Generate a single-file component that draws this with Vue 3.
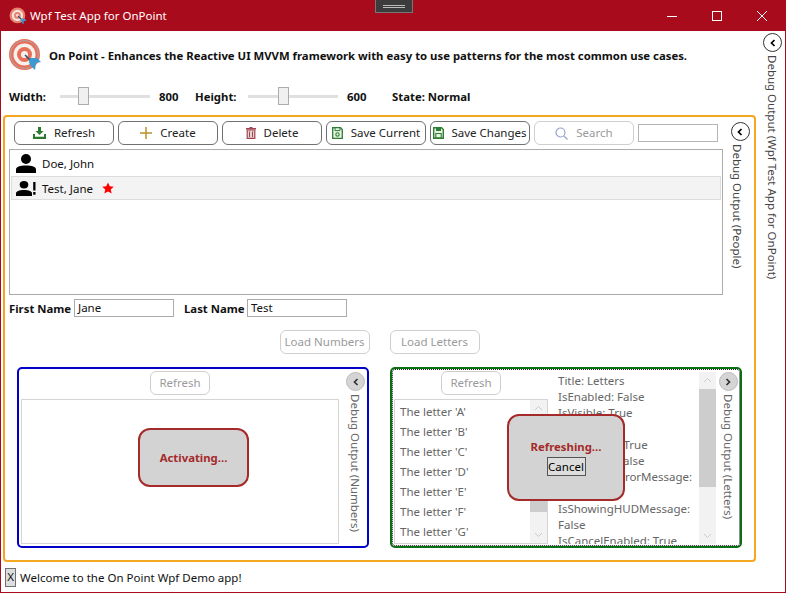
<script setup>
const letters = ['A', 'B', 'C', 'D', 'E', 'F', 'G', 'H']
const debugLines = [
  'Title: Letters',
  'IsEnabled: False',
  'IsVisible: True',
  'IsBusy: True',
  'IsActivated: True',
  'IsLoading: False',
  'IsShowingErrorMessage:',
  'False',
  'IsShowingHUDMessage:',
  'False',
  'IsCancelEnabled: True'
]
</script>

<template>
  <div class="window">
    <header class="titlebar">
      <svg class="app-icon" width="18" height="18" viewBox="0 0 32 32">
        <circle cx="15" cy="15" r="14" fill="#e8826e" />
        <circle cx="15" cy="15" r="10" fill="#f4e4de" />
        <circle cx="15" cy="15" r="6" fill="#e8826e" />
        <circle cx="15" cy="15" r="2.5" fill="#f4e4de" />
        <path d="M16 16 L24 24" stroke="#34506b" stroke-width="2" />
        <path d="M21 21 L28 21 L31 25 L26 25 L26 31 L22 27 Z" fill="#3a9bd0" />
      </svg>
      <span class="title-text">Wpf Test App for OnPoint</span>
      <div class="debug-strip"><i></i><i></i></div>
      <div class="caption-buttons">
        <svg width="12" height="12" viewBox="0 0 12 12"><path d="M1 6.5H11" stroke="#fff" stroke-width="1" /></svg>
        <svg width="12" height="12" viewBox="0 0 12 12"><rect x="1.5" y="1.5" width="9" height="9" fill="none" stroke="#fff" /></svg>
        <svg width="12" height="12" viewBox="0 0 12 12"><path d="M1 1L11 11M11 1L1 11" stroke="#fff" stroke-width="1" /></svg>
      </div>
    </header>

    <div class="client">
      <div class="main">
        <div class="intro">
          <svg width="32" height="32" viewBox="0 0 32 32">
            <circle cx="15.5" cy="15.5" r="15.5" fill="#e8705a" />
            <circle cx="15.5" cy="15.5" r="14" fill="none" stroke="#a9a9a9" stroke-width="1" />
            <circle cx="15.5" cy="15.5" r="11" fill="#f6f1ea" />
            <circle cx="15.5" cy="15.5" r="7.5" fill="#e8705a" />
            <circle cx="15.5" cy="15.5" r="3.5" fill="#f6f1ea" />
            <path d="M16 16 L23 23" stroke="#34506b" stroke-width="1.6" />
            <path d="M21 19 L28 19 L32 23 L27 24 L26 31 L21 26 L20 23 Z" fill="#3a9bd0" />
          </svg>
          <b>On Point - Enhances the Reactive UI MVVM framework with easy to use patterns for the most common use cases.</b>
        </div>

        <div class="sizes">
          <b class="size-label">Width:</b>
          <div class="slider first"><span class="thumb"></span></div>
          <b class="size-value">800</b>
          <b class="size-label height">Height:</b>
          <div class="slider"><span class="thumb"></span></div>
          <b class="size-value">600</b>
          <b class="state">State: Normal</b>
        </div>

        <section class="people">
          <div class="people-top">
            <div class="people-left">
              <div class="toolbar">
                <button class="btn">
                  <svg width="13" height="12" viewBox="0 0 13 12"><path d="M5 0H8V4H10.5L6.5 8L2.5 4H5Z" fill="#2a7a2e" /><path d="M0 7V12H13V7H11V9.7H2V7Z" fill="#2a7a2e" /></svg>
                  Refresh
                </button>
                <button class="btn">
                  <svg width="12" height="12" viewBox="0 0 12 12"><path d="M6 0V12M0 6H12" stroke="#b8922c" stroke-width="1.5" /></svg>
                  Create
                </button>
                <button class="btn">
                  <svg width="10" height="12" viewBox="0 0 10 12"><path d="M3.5 0H6.5V1H10V2.5H0V1H3.5Z" fill="#a04550" /><path d="M1.2 3H8.8V11.4H1.2Z" fill="#e8d3d5" stroke="#a04550" stroke-width="1.2" /><path d="M3.5 4.5V10M6.5 4.5V10" stroke="#a04550" stroke-width="1" /></svg>
                  Delete
                </button>
                <button class="btn">
                  <svg width="11" height="12" viewBox="0 0 11 12"><path d="M.7 .7H8.5L10.3 2.5V11.3H.7Z" fill="#e9f3e4" stroke="#2d7d32" stroke-width="1.3" /><path d="M3 1V3.6H8V1" fill="none" stroke="#2d7d32" /><circle cx="5.5" cy="7.5" r="1.7" fill="none" stroke="#2d7d32" stroke-width="1.1" /></svg>
                  Save Current
                </button>
                <button class="btn save-changes">
                  <svg width="11" height="12" viewBox="0 0 11 12"><path d="M.7 .7H8.5L10.3 2.5V11.3H.7Z" fill="#e9f3e4" stroke="#2d7d32" stroke-width="1.4" /><path d="M3 1H8V4H3Z" fill="#2d7d32" /><path d="M2.8 6.5H8.2V11H2.8Z" fill="none" stroke="#2d7d32" stroke-width="1.1" /></svg>
                  Save Changes
                </button>
                <button class="btn disabled">
                  <svg width="13" height="13" viewBox="0 0 13 13"><circle cx="5.5" cy="5.5" r="4.5" fill="none" stroke="#9aa0d0" stroke-width="1.2" /><path d="M8.8 8.8L12.5 12.5" stroke="#9aa0d0" stroke-width="1.2" /></svg>
                  Search
                </button>
                <div class="search-box"></div>
              </div>
              <div class="people-list">
                <div class="person">
                  <svg width="20" height="19" viewBox="0 0 20 19"><circle cx="10" cy="5" r="5" /><path d="M0 19V15.5C0 12.8 4 11.5 10 11.5S20 12.8 20 15.5V19Z" /></svg>
                  <span>Doe, John</span>
                </div>
                <div class="person selected">
                  <svg width="20" height="15" viewBox="0 0 20 15"><ellipse cx="8" cy="3.7" rx="4.3" ry="3.7" /><path d="M0 15V12.2C0 10.4 3 9 8 9S16 10.4 16 12.2V15Z" /><path d="M17.2 1H19.5V9.5H17.2ZM17.2 11H19.5V13.8H17.2Z" /></svg>
                  <span>Test, Jane</span>
                  <svg class="star" width="12" height="12" viewBox="0 0 24 24"><path d="M12 1L15.5 8.6L23.5 9.4L17.5 15L19.3 23L12 18.8L4.7 23L6.5 15L.5 9.4L8.5 8.6Z" fill="#f00" /></svg>
                </div>
              </div>
            </div>
            <aside class="debug-col people-debug">
              <span class="toggle"><svg width="8" height="8" viewBox="0 0 8 8"><path d="M5.5 1L2.5 4L5.5 7" fill="none" stroke="#000" stroke-width="1.7" /></svg></span>
              <span class="vertical nudged">Debug Output (People)</span>
            </aside>
          </div>

          <div class="names">
            <b class="name-label">First Name</b>
            <div class="field">Jane</div>
            <b class="name-label last-label">Last Name</b>
            <div class="field last-field">Test</div>
          </div>

          <div class="loaders">
            <button class="btn disabled load">Load Numbers</button>
            <button class="btn disabled load">Load Letters</button>
          </div>

          <div class="boards">
            <div class="board blue">
              <div class="board-left">
                <button class="btn disabled small">Refresh</button>
                <div class="board-list numbers"></div>
              </div>
              <aside class="debug-col board-debug numbers-debug">
                <span class="toggle grey"><svg width="8" height="8" viewBox="0 0 8 8"><path d="M5.5 1L2.5 4L5.5 7" fill="none" stroke="#333" stroke-width="1.7" /></svg></span>
                <span class="vertical grey-text">Debug Output (Numbers)</span>
              </aside>
              <div class="hud activating"><b>Activating...</b></div>
            </div>

            <div class="board green">
              <div class="board-left letters-col">
                <button class="btn disabled small">Refresh</button>
                <div class="board-list letters">
                  <div class="letter-rows">
                    <div v-for="l in letters" :key="l" class="letter">The letter '{{ l }}'</div>
                  </div>
                  <div class="scroll mini">
                    <svg width="9" height="6" viewBox="0 0 9 6"><path d="M1 5L4.5 1.5L8 5" fill="none" stroke="#ccc" /></svg>
                    <div class="scroll-space"><span class="scroll-thumb mini-thumb"></span></div>
                    <svg width="9" height="6" viewBox="0 0 9 6"><path d="M1 1L4.5 4.5L8 1" fill="none" stroke="#ccc" /></svg>
                  </div>
                </div>
              </div>
              <div class="debug-text">
                <div class="debug-lines">
                  <div v-for="(line, i) in debugLines" :key="i">{{ line }}</div>
                </div>
                <div class="scroll">
                  <svg width="9" height="6" viewBox="0 0 9 6"><path d="M1 5L4.5 1.5L8 5" fill="none" stroke="#ccc" /></svg>
                  <div class="scroll-space"><span class="scroll-thumb big-thumb"></span></div>
                  <svg width="9" height="6" viewBox="0 0 9 6"><path d="M1 1L4.5 4.5L8 1" fill="none" stroke="#ccc" /></svg>
                </div>
              </div>
              <aside class="debug-col board-debug">
                <span class="toggle grey"><svg width="8" height="8" viewBox="0 0 8 8"><path d="M2.5 1L5.5 4L2.5 7" fill="none" stroke="#333" stroke-width="1.7" /></svg></span>
                <span class="vertical grey-text">Debug Output (Letters)</span>
              </aside>
              <div class="hud refreshing">
                <b>Refreshing...</b>
                <button class="cancel">Cancel</button>
              </div>
            </div>
          </div>
        </section>

        <footer class="status">
          <button class="close-x">X</button>
          <span>Welcome to the On Point Wpf Demo app!</span>
        </footer>
      </div>

      <aside class="debug-col window-debug">
        <span class="toggle"><svg width="8" height="8" viewBox="0 0 8 8"><path d="M5.5 1L2.5 4L5.5 7" fill="none" stroke="#000" stroke-width="1.7" /></svg></span>
        <span class="vertical">Debug Output (Wpf Test App for OnPoint)</span>
      </aside>
    </div>
  </div>
</template>

<style scoped>
.window {
  width: 786px;
  height: 593px;
  box-sizing: border-box;
  border: 1px solid #a80b1c;
  border-top: 0;
  display: flex;
  flex-direction: column;
  background: #fff;
  color: #111;
  font-family: "Noto Sans", "Open Sans", sans-serif;
  font-size: 11.5px;
  overflow: hidden;
}

b {
  font-size: 11.35px;
}

.titlebar {
  height: 31px;
  flex: none;
  background: #a80b1c;
  display: flex;
  align-items: center;
  color: #fff;
  position: relative;
}

.app-icon {
  margin-left: 8px;
}

.title-text {
  margin-left: 3px;
}

.debug-strip {
  position: absolute;
  left: 374px;
  top: 0;
  width: 38px;
  height: 13px;
  box-sizing: border-box;
  background: #3c3c3c;
  border: 1px solid #777;
  border-top: 0;
  display: flex;
  flex-direction: column;
  align-items: center;
  justify-content: center;
  gap: 1px;
}

.debug-strip i {
  display: block;
  width: 22px;
  height: 1px;
  background: #bbb;
}

.caption-buttons {
  margin-left: auto;
  margin-right: 17px;
  display: flex;
  gap: 33px;
}

.client {
  flex: 1;
  display: flex;
  min-height: 0;
}

.main {
  width: 756px;
  flex: none;
  display: flex;
  flex-direction: column;
}

.intro {
  display: flex;
  align-items: center;
  height: 32px;
  margin: 8px 0 0 8px;
  gap: 8px;
}

.sizes {
  display: flex;
  align-items: center;
  height: 20px;
  margin: 15px 0 0 8px;
}

.size-label {
  width: 51px;
}

.size-label.height {
  width: 53px;
  margin-left: 15px;
}

.slider {
  width: 90px;
  height: 3px;
  background: #e0e0e0;
  position: relative;
  display: flex;
  align-items: center;
}

.thumb {
  position: absolute;
  left: 30px;
  width: 11px;
  height: 18px;
  box-sizing: border-box;
  background: #f0f0f0;
  border: 1px solid #acacac;
}

.slider.first .thumb {
  left: 18px;
}

.size-value {
  margin-left: 9px;
  width: 21px;
}

.state {
  margin-left: 24px;
}

.people {
  width: 753px;
  height: 447px;
  box-sizing: border-box;
  margin: 9px 0 0 2px;
  border: 2px solid #f5a623;
  border-radius: 4px;
  padding: 0 4px;
  display: flex;
  flex-direction: column;
}

.people-top {
  display: flex;
  height: 178px;
  flex: none;
}

.people-left {
  width: 714px;
  flex: none;
  display: flex;
  flex-direction: column;
}

.toolbar {
  height: 32px;
  flex: none;
  display: flex;
  align-items: center;
  gap: 4px;
  padding-left: 5px;
}

.btn {
  width: 100px;
  height: 24px;
  flex: none;
  box-sizing: border-box;
  background: #fff;
  border: 1px solid #707070;
  border-radius: 6px;
  font: inherit;
  color: #222;
  white-space: nowrap;
  display: flex;
  align-items: center;
  justify-content: center;
  gap: 8px;
  padding: 0 0 2px;
}

.btn svg {
  margin-top: 2px;
}

.btn.save-changes {
  gap: 7px;
}

.btn.disabled {
  border-color: #cfcfcf;
  color: #9a9a9a;
}

.search-box {
  width: 80px;
  height: 18px;
  box-sizing: border-box;
  border: 1px solid #b5b5b5;
}

.people-list {
  flex: 1;
  box-sizing: border-box;
  border: 1px solid #ababab;
  padding: 1px;
}

.person {
  height: 25px;
  box-sizing: border-box;
  display: flex;
  align-items: center;
  gap: 6px;
  padding-left: 5px;
}

.person.selected {
  height: 24px;
  background: #f3f3f3;
  border: 1px solid #dcdcdc;
  padding-left: 4px;
}

.star {
  margin-left: 3px;
}

.debug-col {
  display: flex;
  flex-direction: column;
  align-items: center;
}

.people-debug {
  flex: 1;
  padding: 5px 0 0 7px;
}

.toggle {
  width: 19px;
  height: 19px;
  flex: none;
  box-sizing: border-box;
  border: 1px solid #333;
  border-radius: 50%;
  background: #fff;
  display: flex;
  align-items: center;
  justify-content: center;
}

.toggle.grey {
  background: #d5d5d5;
  border-color: #bbb;
}

.vertical {
  writing-mode: vertical-rl;
  white-space: nowrap;
  color: #444;
  margin-top: 3px;
}

.nudged {
  margin-right: 5px;
}

.grey-text {
  color: #666;
}

.names {
  height: 18px;
  flex: none;
  margin-top: 4px;
  display: flex;
  align-items: center;
}

.name-label {
  width: 60px;
  white-space: nowrap;
}

.field {
  width: 100px;
  height: 18px;
  box-sizing: border-box;
  border: 1px solid #ababab;
  padding-left: 3px;
  margin-left: 5px;
  line-height: 16px;
}

.last-label {
  margin-left: 10px;
}

.last-field {
  margin-left: 3px;
}

.loaders {
  flex: none;
  margin-top: 13px;
  display: flex;
  justify-content: center;
  gap: 20px;
}

.load {
  width: 90px;
}

.boards {
  flex: 1;
  margin-top: 13px;
  display: flex;
  gap: 21px;
  padding-left: 8px;
}

.board {
  width: 352px;
  height: 181px;
  box-sizing: border-box;
  border: 2px solid #0000c8;
  border-radius: 5px;
  display: flex;
  position: relative;
}

.board.green {
  border: 2px solid #0a6e14;
  outline: 1px dotted #222;
  outline-offset: -3px;
}

.board-left {
  width: 318px;
  flex: none;
  margin-left: 2px;
  display: flex;
  flex-direction: column;
  align-items: center;
  padding-top: 2px;
}

.small {
  width: 60px;
}

.board-list {
  flex: 1;
  align-self: stretch;
  margin: 4px 0 2px;
  box-sizing: border-box;
  border: 1px solid #d5d5d5;
}

.board-debug {
  flex: 1;
  padding-top: 3px;
}

.numbers-debug {
  padding-left: 5px;
}

.letters-col {
  width: 154px;
}

.letters {
  display: flex;
  overflow: hidden;
}

.letter-rows {
  flex: 1;
  overflow: hidden;
  padding-top: 2px;
}

.letter {
  height: 20px;
  line-height: 20px;
  padding-left: 5px;
  color: #666;
  white-space: nowrap;
}

.scroll {
  width: 17px;
  flex: none;
  background: #f2f2f2;
  display: flex;
  flex-direction: column;
  align-items: center;
  padding: 5px 0;
  box-sizing: border-box;
}

.scroll-space {
  flex: 1;
  align-self: stretch;
}

.scroll-thumb {
  display: block;
  background: #cdcdcd;
}

.big-thumb {
  height: 98px;
  margin-top: 6px;
}

.mini-thumb {
  height: 61px;
  margin-top: 40px;
}

.debug-text {
  width: 158px;
  flex: none;
  margin: 3px 0 0 10px;
  display: flex;
  height: 172px;
  overflow: hidden;
}

.debug-lines {
  flex: 1;
  padding-top: 1px;
  line-height: 16px;
  color: #666;
  white-space: nowrap;
  overflow: hidden;
}

.hud {
  position: absolute;
  box-sizing: border-box;
  background: #d3d3d3;
  border: 2px solid #a52a2a;
  border-radius: 12px;
  color: #a52a2a;
  display: flex;
  flex-direction: column;
  align-items: center;
  justify-content: center;
}

.activating {
  left: 119px;
  top: 59px;
  width: 111px;
  height: 59px;
}

.refreshing {
  left: 115px;
  top: 45px;
  width: 118px;
  height: 87px;
  gap: 3px;
}

.cancel {
  width: 39px;
  height: 19px;
  box-sizing: border-box;
  background: #ddd;
  border: 1px solid #555;
  font: inherit;
  padding: 0;
  color: #000;
}

.status {
  flex: 1;
  display: flex;
  align-items: center;
  padding-left: 4px;
  gap: 4px;
}

.close-x {
  width: 11px;
  height: 19px;
  box-sizing: border-box;
  padding: 0;
  background: #ddd;
  border: 1px solid #707070;
  font: inherit;
  line-height: 1;
  color: #111;
}

.window-debug {
  flex: 1;
  padding: 2px 0 0 3px;
}
</style>
